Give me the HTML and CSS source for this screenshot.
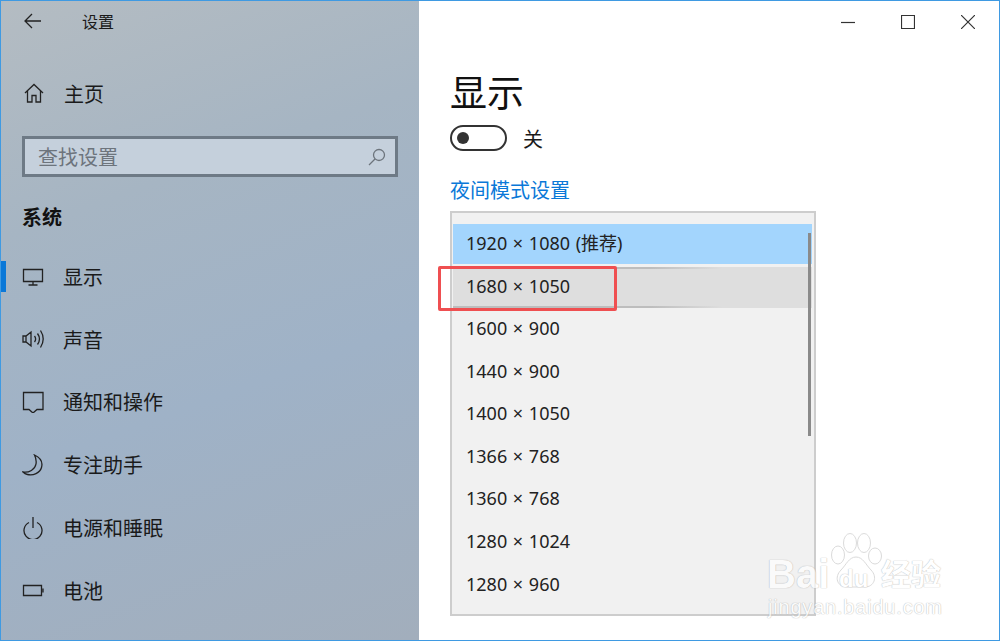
FILE: index.html
```html
<!DOCTYPE html>
<html lang="zh-CN">

<head>
    <meta charset="UTF-8">
    <title>设置</title>
    <link rel="stylesheet" href="styles.css">
</head>

<body>
    <div class="window">
        <aside class="sidebar">
            <div class="title-row">
                <svg class="back-icon" width="18" height="16" viewBox="0 0 18 16"><path d="M8 1 1 8l7 7M1 8h16" /></svg>
                <span class="app-title">设置</span>
            </div>
            <div class="home-row">
                <svg class="nav-icon" width="22" height="22" viewBox="0 0 22 22"><path d="M2 11 11 2.500 20 11M4.500 9V20H9V13.500H13V20H17.500V9" /></svg>
                <span>主页</span>
            </div>
            <div class="search-box">
                <span class="search-text">查找设置</span>
                <svg class="search-icon" width="18" height="18" viewBox="0 0 18 18"><circle cx="11" cy="7" r="5.500" /><path d="M7 11 1 17" /></svg>
            </div>
            <div class="section-title">系统</div>
            <nav class="nav-list">
                <div class="nav-item active">
                    <svg class="nav-icon" width="22" height="22" viewBox="0 0 22 22"><path d="M1.500 4.500H20.500V16.500H1.500ZM11 16.500V20M6.500 20H15.500" /></svg>
                    <span>显示</span>
                </div>
                <div class="nav-item">
                    <svg class="nav-icon" width="22" height="22" viewBox="0 0 22 22"><path d="M1 8V14H4L9 18V4L4 8ZM4 8V14M12.500 8C14 10 14 12 12.500 14M15.500 5.500C18 9 18 13 15.500 16.500M18.500 2.500C22 8 22 14 18.500 19.500" /></svg>
                    <span>声音</span>
                </div>
                <div class="nav-item">
                    <svg class="nav-icon" width="22" height="22" viewBox="0 0 22 22"><path d="M1.500 1.500H21V18.500H15L11 22 7 18.500H1.500Z" /></svg>
                    <span>通知和操作</span>
                </div>
                <div class="nav-item">
                    <svg class="nav-icon" width="22" height="22" viewBox="0 0 22 22"><path d="M12.500 1C18 3.500 21 8 19.500 13.500 18 19 11 22 5.500 20.500 3.500 20 2 19 1 18 7 19 13 15.500 14 10 14.500 7 14 4 12.500 1Z" /></svg>
                    <span>专注助手</span>
                </div>
                <div class="nav-item">
                    <svg class="nav-icon" width="22" height="22" viewBox="0 0 22 22"><path d="M7 5.500A9 9 0 1 0 15 5.500M11 0V11" /></svg>
                    <span>电源和睡眠</span>
                </div>
                <div class="nav-item">
                    <svg class="nav-icon" width="22" height="22" viewBox="0 0 22 22"><path d="M1.500 6.500H19.500V16.500H1.500ZM21 9.500V13.500" /></svg>
                    <span>电池</span>
                </div>
            </nav>
        </aside>

        <main class="content">
            <div class="window-controls">
                <svg class="win-icon" width="14" height="14" viewBox="0 0 14 14"><path d="M0 7.500H14" /></svg>
                <svg class="win-icon" width="14" height="14" viewBox="0 0 14 14"><path d="M.5 .5H13.500V13.500H.5Z" /></svg>
                <svg class="win-icon" width="14" height="14" viewBox="0 0 14 14"><path d="M0 0 14 14M14 0 0 14" /></svg>
            </div>
            <h1 class="page-title">显示</h1>
            <div class="toggle-row">
                <div class="toggle"><div class="toggle-dot"></div></div>
                <span>关</span>
            </div>
            <div class="link">夜间模式设置</div>
            <div class="res-list">
                <div class="res-item selected">1920 × 1080 (推荐)</div>
                <div class="res-item hover">1680 × 1050</div>
                <div class="res-item">1600 × 900</div>
                <div class="res-item">1440 × 900</div>
                <div class="res-item">1400 × 1050</div>
                <div class="res-item">1366 × 768</div>
                <div class="res-item">1360 × 768</div>
                <div class="res-item">1280 × 1024</div>
                <div class="res-item">1280 × 960</div>
                <div class="scrollbar"></div>
            </div>
        </main>
    </div>

    <!-- annotation and watermark sit over the screenshot -->
    <div class="red-box"></div>
    <div class="watermark">
        <svg class="paw" width="56" height="58" viewBox="0 0 56 58"><ellipse cx="10" cy="23" rx="6.500" ry="9" /><ellipse cx="22" cy="11" rx="6.500" ry="9.500" /><ellipse cx="36" cy="11" rx="6.500" ry="9.500" /><ellipse cx="47" cy="24" rx="6.500" ry="8" /><path d="M28 25C35 25 38 33 43 38 50 45 46 55 37 55H19C9 55 6 45 13 38 18 33 21 25 28 25Z" /></svg>
        <span class="wm-bai">Bai</span>
        <span class="wm-du">du</span>
        <span class="wm-cn">经验</span>
        <span class="wm-url">jingyan.baidu.com</span>
    </div>
</body>

</html>
```

FILE: styles.css
```css
* {
    box-sizing: border-box;
}

body {
    margin: 0;
    width: 1000px;
    height: 641px;
    overflow: hidden;
    position: relative;
    font-family: "Noto Sans CJK SC", "Liberation Sans", sans-serif;
    color: #1a1a1a;
}

.window {
    display: flex;
    width: 1000px;
    height: 641px;
    border: 1px solid #3f9ae2;
    background: #fff;
}

svg path,
svg circle {
    fill: none;
    stroke: #222;
    stroke-width: 1.3;
}

/* left column */
.sidebar {
    width: 418px;
    flex-shrink: 0;
    background: linear-gradient(160deg, #b4bcc2 0%, #a6b5c3 30%, #9fb2c7 60%, #a2aebc 100%);
    padding-left: 21px;
}

.title-row {
    display: flex;
    align-items: center;
    height: 40px;
    padding-left: 2px;
}

.back-icon {
    margin-right: 40px;
}

.app-title {
    font-size: 16px;
}

.home-row {
    display: flex;
    align-items: center;
    gap: 19px;
    height: 28px;
    margin-top: 38px;
    font-size: 20px;
    padding-left: 1px;
}

.search-box {
    display: flex;
    align-items: center;
    justify-content: space-between;
    width: 376px;
    height: 41px;
    margin-top: 29px;
    padding: 0 9px 0 13px;
    background: #c5d0dc;
    border: 3px solid #6e7a86;
}

.search-text {
    font-size: 20px;
    color: #6d747c;
}

.search-icon circle,
.search-icon path {
    stroke: #6d747c;
}

.section-title {
    margin-top: 26px;
    font-size: 20px;
    font-weight: 700;
    line-height: 28px;
    color: #111;
}

.nav-list {
    margin-top: 14px;
}

.nav-item {
    display: flex;
    align-items: center;
    gap: 19px;
    height: 62.800px;
    font-size: 20px;
    position: relative;
}

.nav-item.active::before {
    content: "";
    position: absolute;
    left: -21px;
    top: 16px;
    width: 5px;
    height: 31px;
    background: #0a78d8;
}

/* right column */
.content {
    flex: 1;
    padding-left: 31px;
    position: relative;
}

.window-controls {
    display: flex;
    justify-content: flex-end;
    gap: 46px;
    padding: 14px 24px 0 0;
    height: 66px;
}

.win-icon path {
    stroke: #333;
    stroke-width: 1.200;
}

.page-title {
    margin: 0;
    font-size: 37px;
    font-weight: 400;
    line-height: 48px;
    color: #111;
}

.toggle-row {
    display: flex;
    align-items: center;
    gap: 16px;
    height: 26px;
    margin-top: 10px;
    font-size: 20px;
}

.toggle {
    width: 57px;
    height: 26px;
    border: 2px solid #333;
    border-radius: 13px;
    display: flex;
    align-items: center;
    padding-left: 5px;
}

.toggle-dot {
    width: 12px;
    height: 12px;
    border-radius: 50%;
    background: #333;
}

.link {
    margin-top: 25px;
    font-size: 20px;
    line-height: 28px;
    color: #0a78d8;
}

.res-list {
    position: relative;
    width: 366px;
    height: 405px;
    margin-top: 7px;
    padding: 11px 2px 0 1px;
    background: #f1f1f1;
    border: 2px solid #cdcdcd;
}

.res-item {
    display: flex;
    align-items: center;
    height: 42.600px;
    padding: 0 0 5px 13px;
    font-family: "Noto Sans", "Noto Sans CJK SC", sans-serif;
    font-size: 18px;
    word-spacing: 1px;
    color: #222;
}

.res-item.selected {
    background: #a3d5fd;
    background-clip: padding-box;
    border-bottom: 3px solid transparent;
    padding-bottom: 3px;
}

/* hover row has grey lines top and bottom that fade out to the right */
.res-item.hover {
    background-color: #dedede;
    background-image: linear-gradient(to right, #bdbdbd 55%, #dedede 75%), linear-gradient(to right, #bdbdbd 55%, #dedede 75%);
    background-size: 100% 2px;
    background-position: 0 0, 0 39px;
    background-repeat: no-repeat;
    height: 41px;
    margin-bottom: 1.600px;
    padding-bottom: 3px;
}

.scrollbar {
    position: absolute;
    right: 3px;
    top: 20px;
    width: 3px;
    height: 203px;
    background: #8a8a8a;
}

/* overlays */
.red-box {
    position: absolute;
    left: 438px;
    top: 266px;
    width: 179px;
    height: 45px;
    border: 3px solid #ef4f51;
    border-radius: 2px;
}

.watermark {
    position: absolute;
    left: 765px;
    top: 530px;
    width: 190px;
    height: 100px;
    color: #fff;
    font-family: "Liberation Sans", sans-serif;
    text-shadow: 0 0 1px #aaa, 0 0 1px #aaa;
    opacity: .7;
}

.paw {
    position: absolute;
    left: 63px;
    top: 2px;
}

.paw ellipse,
.paw path {
    fill: #fff;
    stroke: #ccc;
    stroke-width: 1;
}

.wm-bai {
    position: absolute;
    left: 2px;
    top: 22px;
    font-size: 40px;
    font-weight: 700;
}

.wm-du {
    position: absolute;
    left: 74px;
    top: 35px;
    font-size: 24px;
    font-weight: 700;
}

.wm-cn {
    position: absolute;
    left: 116px;
    top: 24px;
    font-size: 30px;
    line-height: 36px;
    font-family: "Noto Sans CJK SC", sans-serif;
    font-weight: 700;
}

.wm-url {
    position: absolute;
    left: 3px;
    top: 66px;
    font-size: 20px;
    letter-spacing: .8px;
}
```
